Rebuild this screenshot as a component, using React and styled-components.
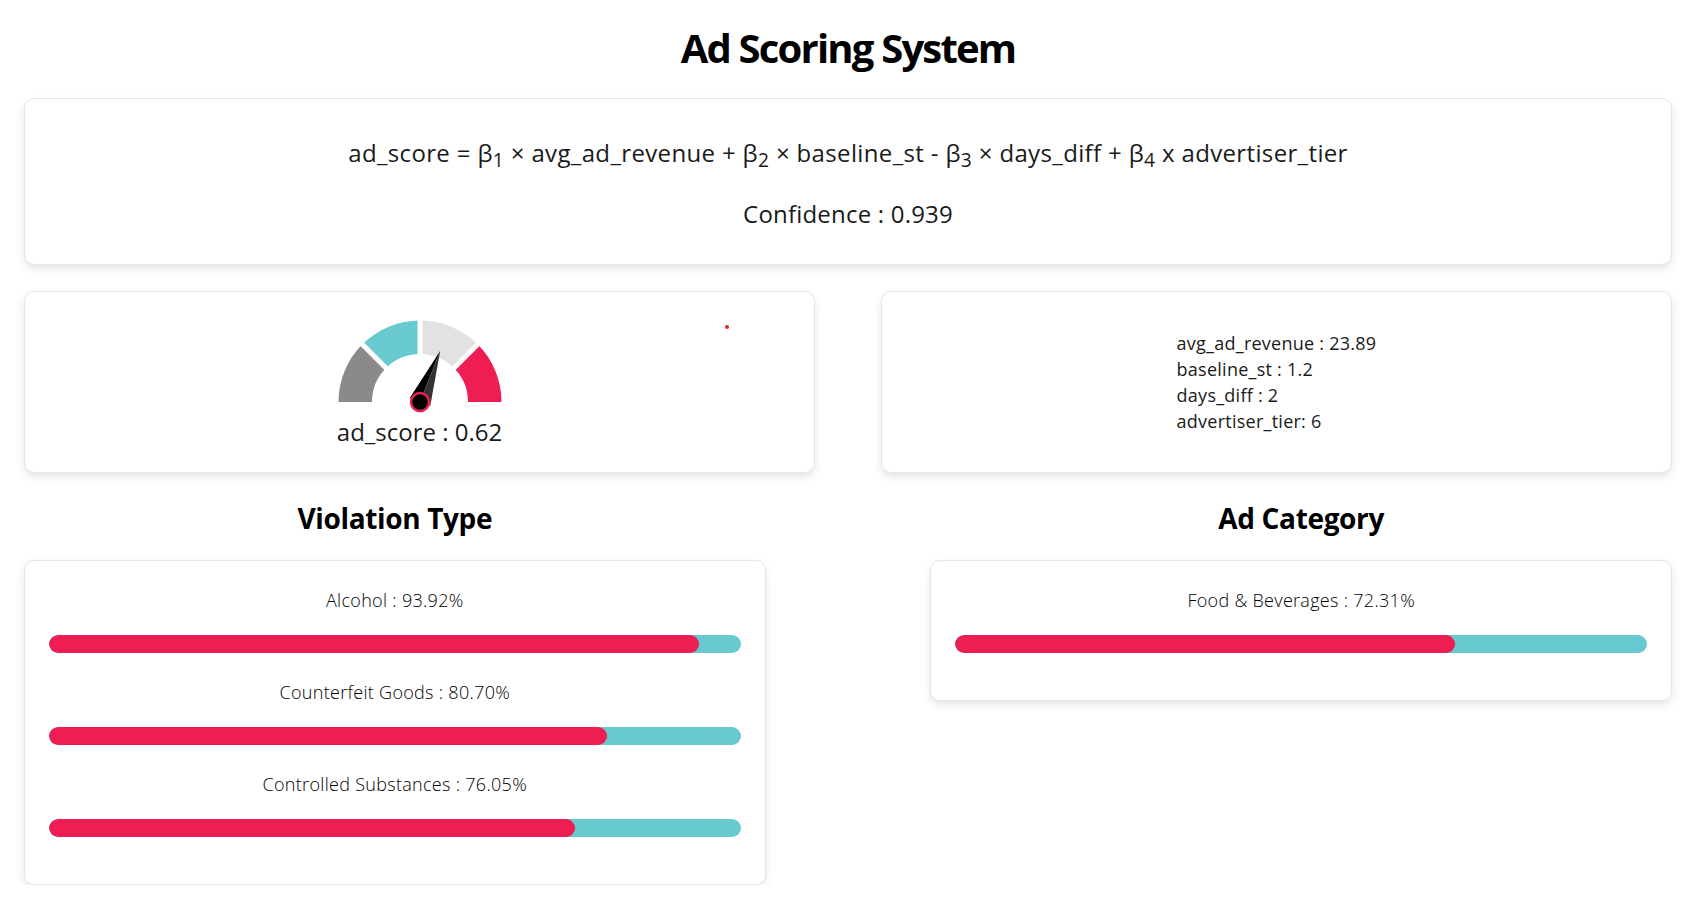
import React from "react";
import styled, { createGlobalStyle } from "styled-components";

const FONT = `"Open Sans", "Noto Sans", sans-serif`;
const TEAL = "#69C9D0";
const RED = "#EE1D52";

const GlobalStyle = createGlobalStyle`
  html, body { margin: 0; padding: 0; background: #ffffff; }
  body { font-family: ${FONT}; color: #1a1a1a; }
  * { box-sizing: border-box; }
`;

const Page = styled.div`
  padding: 24px 24px 0;
`;

const Title = styled.h1`
  margin: 0 0 26px;
  font-size: 40px;
  line-height: 48px;
  font-weight: 700;
  letter-spacing: -1.8px;
  text-align: center;
  color: #000;
`;

const Card = styled.div`
  background: #fff;
  border: 1px solid #e6e6e6;
  border-radius: 10px;
  box-shadow: 0 4px 8px rgba(0, 0, 0, 0.1);
`;

const FormulaCard = styled(Card)`
  padding: 38px 24px 34px;
  display: flex;
  flex-direction: column;
  gap: 29px;
  text-align: center;
`;

const FormulaLine = styled.div`
  font-size: 24px;
  line-height: 32px;
  letter-spacing: ${(p) => p.$spacing || "0.35px"};
  white-space: nowrap;

  sub {
    font-size: 0.8em;
    line-height: 0;
    vertical-align: -0.25em;
  }
`;

const Row = styled.div`
  display: flex;
  justify-content: space-between;
  margin-top: 26px;
`;

const GaugeCard = styled(Card)`
  position: relative;
  width: 48%;
  padding: 24px;
  display: flex;
  flex-direction: column;
  align-items: center;
`;

const Dot = styled.span`
  position: absolute;
  top: 33px;
  left: 700px;
  width: 4px;
  height: 4px;
  border-radius: 50%;
  background: #e3262f;
`;

const ScoreLabel = styled.div`
  font-size: 24px;
  line-height: 32px;
`;

const ValuesCard = styled(Card)`
  width: 48%;
  display: flex;
  align-items: center;
  justify-content: center;
`;

const ValueList = styled.div`
  font-size: 18px;
  line-height: 26px;
  letter-spacing: 0.25px;
`;

const Sections = styled.div`
  display: flex;
  justify-content: space-between;
  margin-top: 27px;
`;

const Section = styled.section`
  width: 45%;
`;

const SectionTitle = styled.h2`
  margin: 0 0 24px;
  font-size: 28px;
  line-height: 36px;
  font-weight: 700;
  letter-spacing: -0.35px;
  text-align: center;
  color: #000;
`;

const BarCard = styled(Card)`
  padding: 27px 24px 47px;
  display: flex;
  flex-direction: column;
  gap: 27px;
`;

const BarItem = styled.div`
  display: flex;
  flex-direction: column;
  gap: 23px;
`;

const BarLabel = styled.div`
  font-size: 18px;
  line-height: 24px;
  font-weight: 300;
  letter-spacing: 0.3px;
  text-align: center;
  color: #000;
`;

const Track = styled.div`
  height: 18px;
  border-radius: 9px;
  background: ${TEAL};
  overflow: hidden;
`;

const Fill = styled.div`
  height: 100%;
  border-radius: 9px;
  background: ${RED};
`;

const segments = [
  { from: 180, to: 135, color: "#8a8a8a" },
  { from: 135, to: 90, color: TEAL },
  { from: 90, to: 45, color: "#e2e2e2" },
  { from: 45, to: 0, color: RED },
];

const CX = 90;
const CY = 86;
const R_OUT = 81.5;
const R_IN = 48;

const pt = (r, deg) => {
  const a = (deg * Math.PI) / 180;
  return [CX + r * Math.cos(a), CY - r * Math.sin(a)];
};

const arcPath = (from, to) => {
  const [x1, y1] = pt(R_OUT, from);
  const [x2, y2] = pt(R_OUT, to);
  const [x3, y3] = pt(R_IN, to);
  const [x4, y4] = pt(R_IN, from);
  return `M${x1} ${y1} A${R_OUT} ${R_OUT} 0 0 1 ${x2} ${y2} L${x3} ${y3} A${R_IN} ${R_IN} 0 0 0 ${x4} ${y4} Z`;
};

// needle: two halves, black on the left, dark grey on the right
function Gauge({ value }) {
  const theta = 180 - value * 180;
  const a = (theta * Math.PI) / 180;
  const d = [Math.cos(a), -Math.sin(a)];
  const n = [-d[1], d[0]];
  const w = 11;
  const tip = [CX + 55 * d[0], CY + 55 * d[1]];
  const left = [CX - w * n[0], CY - w * n[1]];
  const right = [CX + w * n[0], CY + w * n[1]];
  return (
    <svg width="180" height="100" viewBox="0 0 180 100">
      {segments.map((s) => (
        <path key={s.from} d={arcPath(s.from, s.to)} fill={s.color} />
      ))}
      {[135, 90, 45].map((deg) => {
        const [x1, y1] = pt(R_IN - 2, deg);
        const [x2, y2] = pt(R_OUT + 2, deg);
        return <line key={deg} x1={x1} y1={y1} x2={x2} y2={y2} stroke="#fff" strokeWidth="5" />;
      })}
      <polygon points={`${tip.join(",")} ${CX},${CY} ${left.join(",")}`} fill="#000" />
      <polygon points={`${tip.join(",")} ${CX},${CY} ${right.join(",")}`} fill="#333" />
      <circle cx={CX} cy={CY} r="9" fill="#000" stroke={RED} strokeWidth="2.5" />
    </svg>
  );
}

const violations = [
  { name: "Alcohol", value: 93.92 },
  { name: "Counterfeit Goods", value: 80.7 },
  { name: "Controlled Substances", value: 76.05 },
];

const categories = [{ name: "Food & Beverages", value: 72.31 }];

function BarList({ items }) {
  return (
    <BarCard>
      {items.map((item) => (
        <BarItem key={item.name}>
          <BarLabel>
            {item.name} : {item.value.toFixed(2)}%
          </BarLabel>
          <Track>
            <Fill style={{ width: `${item.value}%` }} />
          </Track>
        </BarItem>
      ))}
    </BarCard>
  );
}

export default function App() {
  return (
    <Page>
      <GlobalStyle />
      <Title>Ad Scoring System</Title>
      <FormulaCard>
        <FormulaLine>
          ad_score = β<sub>1</sub> × avg_ad_revenue + β<sub>2</sub> × baseline_st - β<sub>3</sub> × days_diff + β<sub>4</sub> x advertiser_tier
        </FormulaLine>
        <FormulaLine $spacing="0.2px">Confidence : 0.939</FormulaLine>
      </FormulaCard>
      <Row>
        <GaugeCard>
          <Dot />
          <Gauge value={0.62} />
          <ScoreLabel>ad_score : 0.62</ScoreLabel>
        </GaugeCard>
        <ValuesCard>
          <ValueList>
            <div>avg_ad_revenue : 23.89</div>
            <div>baseline_st : 1.2</div>
            <div>days_diff : 2</div>
            <div>advertiser_tier: 6</div>
          </ValueList>
        </ValuesCard>
      </Row>
      <Sections>
        <Section>
          <SectionTitle>Violation Type</SectionTitle>
          <BarList items={violations} />
        </Section>
        <Section>
          <SectionTitle>Ad Category</SectionTitle>
          <BarList items={categories} />
        </Section>
      </Sections>
    </Page>
  );
}
